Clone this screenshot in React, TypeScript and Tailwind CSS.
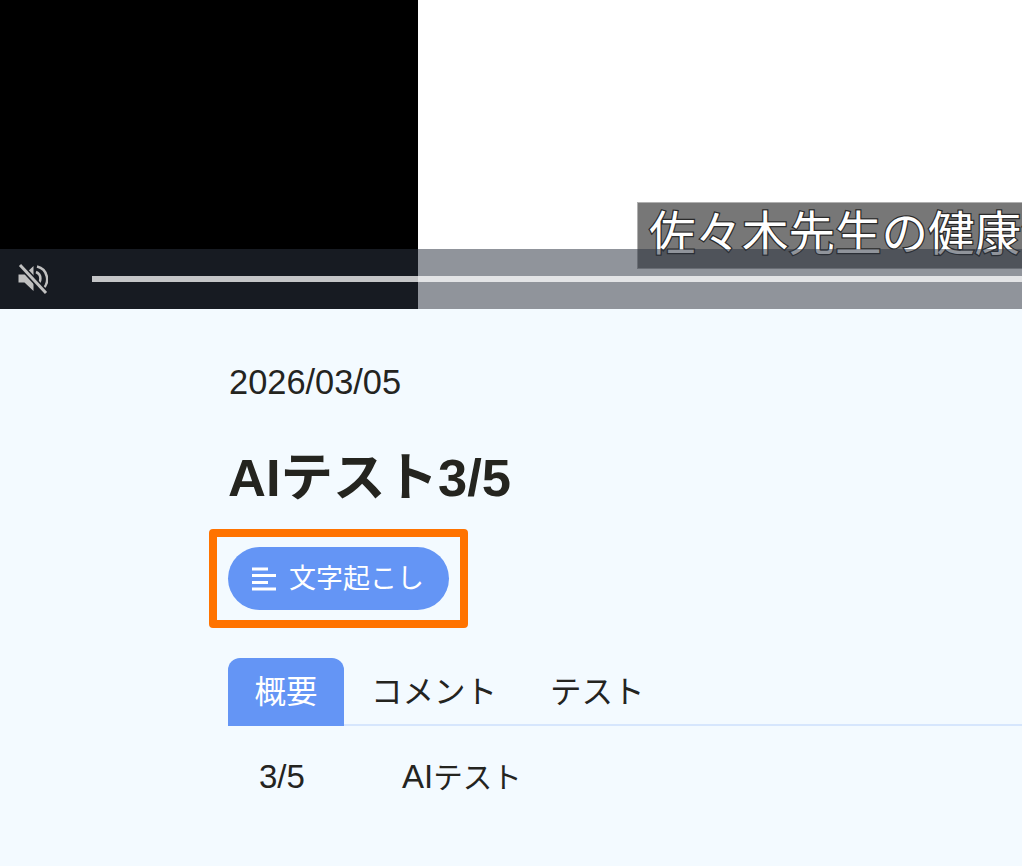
const font = { fontFamily: '"Liberation Sans", "Noto Sans CJK JP", sans-serif' };

function Mute() {
  return (
    <svg viewBox="0 0 32 32" className="h-8 w-8 text-[#c0c0c0]" fill="currentColor">
      <path d="M2.5 11.5h6l9-8.5v25l-9-8.5h-6z" />
      <path d="M20 9a7 7 0 0 1 0 13" fill="none" stroke="currentColor" strokeWidth="2.5" />
      <path d="M21 3.5a13 13 0 0 1 5 23" fill="none" stroke="currentColor" strokeWidth="2.5" />
      <path d="M3 1l27 29" stroke="#171b22" strokeWidth="6" />
      <path d="M4 2l26 28" stroke="currentColor" strokeWidth="3" />
    </svg>
  );
}

function TranscriptIcon() {
  return (
    <svg viewBox="0 0 24 24" className="h-6 w-6" fill="white">
      <rect x="0" y="0.5" width="16" height="3" />
      <rect x="0" y="7" width="24" height="3" />
      <rect x="0" y="14" width="16" height="3" />
      <rect x="0" y="20.5" width="24" height="3" />
    </svg>
  );
}

export default function App() {
  return (
    <div className="min-h-[866px] bg-[#f3faff] text-[#24241f]" style={font}>
      {/* 動画プレイヤー */}
      <div className="relative flex h-[309px] overflow-hidden bg-white">
        <div className="w-[418px] bg-black" />
        <div className="flex-1" />
        {/* 字幕 */}
        <div className="absolute left-[637px] top-[202px] h-[67px] w-[420px] whitespace-nowrap border border-[#b0b0b0] bg-[#777777] pl-[11px] text-[46.5px] leading-[63px] text-white [-webkit-text-stroke:2.5px_#2a2a2a] [paint-order:stroke_fill]">
          佐々木先生の健康法
        </div>
        <div className="absolute inset-x-0 bottom-0 flex h-[60px] items-center bg-[#2c3341]/[0.525] pl-4">
          <Mute />
          <div className="ml-11 h-[6px] flex-1 bg-white/75" />
        </div>
      </div>

      {/* 本文 */}
      <div className="pl-[228px] pt-[51px]">
        <div className="pl-px text-[34.4px] leading-[44px]">2026/03/05</div>
        <h1 className="mt-[38px] text-[52.5px] font-bold leading-[72px]">AIテスト3/5</h1>
        <div className="mt-[15px] ml-[-19px] w-fit rounded-sm border-[8px] border-[#ff7300] px-[11px] py-[10px]">
          <button className="flex h-[63px] w-[221px] items-center gap-[13px] rounded-full bg-[#6495f5] pl-6 text-[27px] text-white">
            <TranscriptIcon />
            <span className="mt-px">文字起こし</span>
          </button>
        </div>
        <div className="mt-[30px] flex h-[68px] border-b-2 border-[#d6e6fd] text-[31.5px] leading-[68px]">
          <div className="h-[68px] w-[116px] rounded-t-xl bg-[#6495f5] text-center text-white">概要</div>
          <div className="ml-[27px]">コメント</div>
          <div className="ml-[53px]">テスト</div>
        </div>
        <div className="flex pl-[31px] pt-[25px] text-[33px] leading-[52px]">
          <div className="w-[143px]">3/5</div>
          <div>AI<span className="text-[29.5px]">テスト</span></div>
        </div>
      </div>
    </div>
  );
}
